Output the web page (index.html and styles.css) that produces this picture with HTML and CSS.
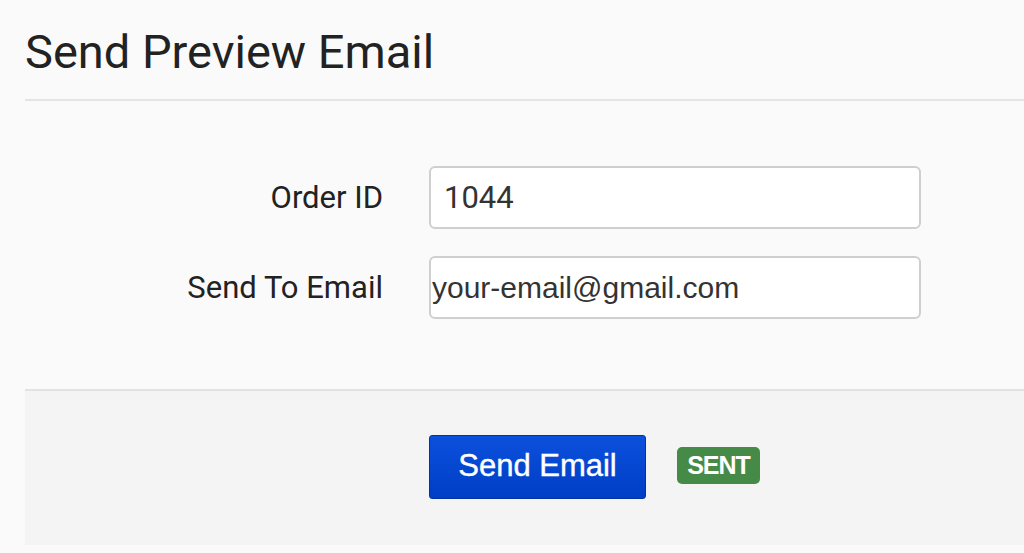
FILE: index.html
```html
<!DOCTYPE html>
<html>
<head>
<meta charset="utf-8">
<link rel="stylesheet" href="styles.css">
</head>
<body>
<div class="page">
  <h1 class="title">Send Preview Email</h1>
  <div class="form">
    <div class="row">
      <label class="label">Order ID</label>
      <div class="input input-num">1044</div>
    </div>
    <div class="row">
      <label class="label">Send To Email</label>
      <div class="input input-email">your-email@gmail.com</div>
    </div>
  </div>
  <div class="footer">
    <button class="btn">Send Email</button>
    <span class="badge">SENT</span>
  </div>
</div>
</body>
</html>
```

FILE: styles.css
```css
html, body {
  margin: 0;
  padding: 0;
  background: #fafafa;
}
.page {
  padding-left: 25px;
  font-family: Roboto, "Liberation Sans", sans-serif;
  color: #222;
}
.title {
  margin: 0;
  padding-top: 24px;
  box-sizing: border-box;
  font-weight: 400;
  font-size: 47px;
  line-height: 56px;
  color: #222;
  border-bottom: 2px solid #e4e4e4;
  height: 101px;
}
.form {
  padding-top: 65px;
  padding-bottom: 70px;
  display: flex;
  flex-direction: column;
  gap: 27px;
}
.row {
  display: flex;
  align-items: center;
}
.label {
  width: 358px;
  text-align: right;
  font-size: 31px;
  color: #222;
  margin-right: 46px;
}
.input {
  width: 492px;
  height: 63px;
  box-sizing: border-box;
  border: 2px solid #cfcfcf;
  border-radius: 6px;
  background: #fff;
  display: flex;
  align-items: center;
  font-size: 31px;
  color: #333;
}
.input-num {
  padding-left: 13px;
  font-family: Roboto, sans-serif;
}
.input-email {
  padding-left: 1px;
  font-family: "Liberation Sans", Arial, sans-serif;
  font-size: 30px;
}
.footer {
  border-top: 2px solid #e2e2e2;
  background: #f4f4f4;
  height: 156px;
  box-sizing: border-box;
  display: flex;
  align-items: center;
  padding-left: 404px;
  padding-bottom: 2px;
}
.btn {
  width: 217px;
  height: 64px;
  border: 1px solid #0033a8;
  border-radius: 3px;
  background: linear-gradient(#0b50dc, #003ec6);
  color: #fff;
  font-family: "Liberation Sans", Arial, sans-serif;
  font-size: 31px;
  padding: 0 0 3px 0;
  -webkit-text-stroke: 0.4px #fff;
}
.badge {
  margin-left: 31px;
  margin-bottom: 3px;
  background: #468a47;
  color: #fff;
  font-family: "Liberation Sans", Arial, sans-serif;
  font-weight: 700;
  font-size: 25px;
  border-radius: 5px;
  height: 37px;
  line-height: 36px;
  width: 83px;
  text-align: center;
  box-sizing: border-box;
  letter-spacing: -1px;
}
```
